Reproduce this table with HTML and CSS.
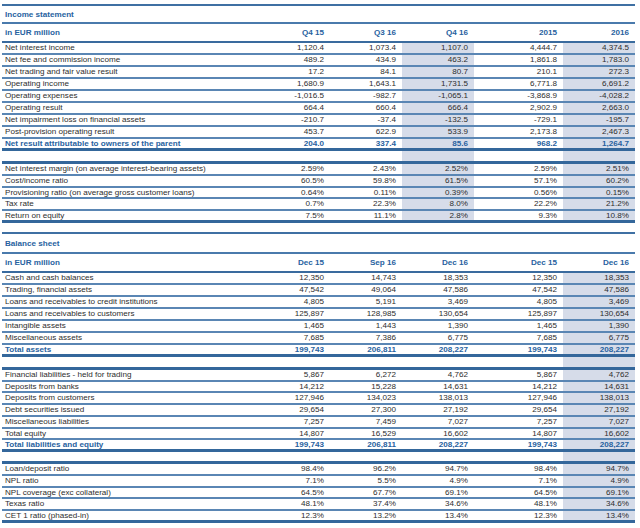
FILE: index.html
```html
<!DOCTYPE html>
<html lang="en">
<head>
<meta charset="utf-8">
<title>Income statement and balance sheet</title>
<link rel="stylesheet" href="styles.css">
</head>
<body>
<div class="sheet">
  <div class="block block--income">
    <div class="title">Income statement</div>
    <div class="row hdr"><div class="lbl">in EUR million</div><div class="v">Q4 15</div><div class="v">Q3 16</div><div class="v">Q4 16</div><div class="sp"></div><div class="v">2015</div><div class="v">2016</div></div>
    <div class="group g12">
      <div class="row r"><div class="lbl">Net interest income</div><div class="v">1,120.4</div><div class="v">1,073.4</div><div class="v">1,107.0</div><div class="sp"></div><div class="v">4,444.7</div><div class="v">4,374.5</div></div>
      <div class="row r"><div class="lbl">Net fee and commission income</div><div class="v">489.2</div><div class="v">434.9</div><div class="v">463.2</div><div class="sp"></div><div class="v">1,861.8</div><div class="v">1,783.0</div></div>
      <div class="row r"><div class="lbl">Net trading and fair value result</div><div class="v">17.2</div><div class="v">84.1</div><div class="v">80.7</div><div class="sp"></div><div class="v">210.1</div><div class="v">272.3</div></div>
      <div class="row r"><div class="lbl">Operating income</div><div class="v">1,680.9</div><div class="v">1,643.1</div><div class="v">1,731.5</div><div class="sp"></div><div class="v">6,771.8</div><div class="v">6,691.2</div></div>
      <div class="row r"><div class="lbl">Operating expenses</div><div class="v">-1,016.5</div><div class="v">-982.7</div><div class="v">-1,065.1</div><div class="sp"></div><div class="v">-3,868.9</div><div class="v">-4,028.2</div></div>
      <div class="row r"><div class="lbl">Operating result</div><div class="v">664.4</div><div class="v">660.4</div><div class="v">666.4</div><div class="sp"></div><div class="v">2,902.9</div><div class="v">2,663.0</div></div>
      <div class="row r"><div class="lbl">Net impairment loss on financial assets</div><div class="v">-210.7</div><div class="v">-37.4</div><div class="v">-132.5</div><div class="sp"></div><div class="v">-729.1</div><div class="v">-195.7</div></div>
      <div class="row r"><div class="lbl">Post-provision operating result</div><div class="v">453.7</div><div class="v">622.9</div><div class="v">533.9</div><div class="sp"></div><div class="v">2,173.8</div><div class="v">2,467.3</div></div>
      <div class="row r total last"><div class="lbl">Net result attributable to owners of the parent</div><div class="v">204.0</div><div class="v">337.4</div><div class="v">85.6</div><div class="sp"></div><div class="v">968.2</div><div class="v">1,264.7</div></div>
    </div>
    <div class="row r gap gap--a"><div></div><div></div><div></div><div class="v"></div><div></div><div></div><div class="v"></div></div>
    <div class="group g118 first">
      <div class="row r"><div class="lbl">Net interest margin (on average interest-bearing assets)</div><div class="v">2.59%</div><div class="v">2.43%</div><div class="v">2.52%</div><div class="sp"></div><div class="v">2.59%</div><div class="v">2.51%</div></div>
      <div class="row r"><div class="lbl">Cost/income ratio</div><div class="v">60.5%</div><div class="v">59.8%</div><div class="v">61.5%</div><div class="sp"></div><div class="v">57.1%</div><div class="v">60.2%</div></div>
      <div class="row r"><div class="lbl">Provisioning ratio (on average gross customer loans)</div><div class="v">0.64%</div><div class="v">0.11%</div><div class="v">0.39%</div><div class="sp"></div><div class="v">0.56%</div><div class="v">0.15%</div></div>
      <div class="row r"><div class="lbl">Tax rate</div><div class="v">0.7%</div><div class="v">22.3%</div><div class="v">8.0%</div><div class="sp"></div><div class="v">22.2%</div><div class="v">21.2%</div></div>
      <div class="row r last"><div class="lbl">Return on equity</div><div class="v">7.5%</div><div class="v">11.1%</div><div class="v">2.8%</div><div class="sp"></div><div class="v">9.3%</div><div class="v">10.8%</div></div>
    </div>
  </div>

  <div class="block block--balance">
    <div class="title title--bs">Balance sheet</div>
    <div class="row hdr"><div class="lbl">in EUR million</div><div class="v">Dec 15</div><div class="v">Sep 16</div><div class="v">Dec 16</div><div class="sp"></div><div class="v">Dec 15</div><div class="v">Dec 16</div></div>
    <div class="group g12">
      <div class="row r"><div class="lbl">Cash and cash balances</div><div class="v">12,350</div><div class="v">14,743</div><div class="v">18,353</div><div class="sp"></div><div class="v">12,350</div><div class="v">18,353</div></div>
      <div class="row r"><div class="lbl">Trading, financial assets</div><div class="v">47,542</div><div class="v">49,064</div><div class="v">47,586</div><div class="sp"></div><div class="v">47,542</div><div class="v">47,586</div></div>
      <div class="row r"><div class="lbl">Loans and receivables to credit institutions</div><div class="v">4,805</div><div class="v">5,191</div><div class="v">3,469</div><div class="sp"></div><div class="v">4,805</div><div class="v">3,469</div></div>
      <div class="row r"><div class="lbl">Loans and receivables to customers</div><div class="v">125,897</div><div class="v">128,985</div><div class="v">130,654</div><div class="sp"></div><div class="v">125,897</div><div class="v">130,654</div></div>
      <div class="row r"><div class="lbl">Intangible assets</div><div class="v">1,465</div><div class="v">1,443</div><div class="v">1,390</div><div class="sp"></div><div class="v">1,465</div><div class="v">1,390</div></div>
      <div class="row r"><div class="lbl">Miscellaneous assets</div><div class="v">7,685</div><div class="v">7,386</div><div class="v">6,775</div><div class="sp"></div><div class="v">7,685</div><div class="v">6,775</div></div>
      <div class="row r total last"><div class="lbl">Total assets</div><div class="v">199,743</div><div class="v">206,811</div><div class="v">208,227</div><div class="sp"></div><div class="v">199,743</div><div class="v">208,227</div></div>
    </div>
    <div class="row r gap"><div></div><div></div><div></div><div></div><div></div><div></div><div class="v"></div></div>
    <div class="group g1175 first">
      <div class="row r"><div class="lbl">Financial liabilities - held for trading</div><div class="v">5,867</div><div class="v">6,272</div><div class="v">4,762</div><div class="sp"></div><div class="v">5,867</div><div class="v">4,762</div></div>
      <div class="row r"><div class="lbl">Deposits from banks</div><div class="v">14,212</div><div class="v">15,228</div><div class="v">14,631</div><div class="sp"></div><div class="v">14,212</div><div class="v">14,631</div></div>
      <div class="row r"><div class="lbl">Deposits from customers</div><div class="v">127,946</div><div class="v">134,023</div><div class="v">138,013</div><div class="sp"></div><div class="v">127,946</div><div class="v">138,013</div></div>
      <div class="row r"><div class="lbl">Debt securities issued</div><div class="v">29,654</div><div class="v">27,300</div><div class="v">27,192</div><div class="sp"></div><div class="v">29,654</div><div class="v">27,192</div></div>
      <div class="row r"><div class="lbl">Miscellaneous liabilities</div><div class="v">7,257</div><div class="v">7,459</div><div class="v">7,027</div><div class="sp"></div><div class="v">7,257</div><div class="v">7,027</div></div>
      <div class="row r"><div class="lbl">Total equity</div><div class="v">14,807</div><div class="v">16,529</div><div class="v">16,602</div><div class="sp"></div><div class="v">14,807</div><div class="v">16,602</div></div>
      <div class="row r total last"><div class="lbl">Total liabilities and equity</div><div class="v">199,743</div><div class="v">206,811</div><div class="v">208,227</div><div class="sp"></div><div class="v">199,743</div><div class="v">208,227</div></div>
    </div>
    <div class="row r gap gap--b"><div></div><div></div><div></div><div></div><div></div><div></div><div class="v"></div></div>
    <div class="group g117 first">
      <div class="row r"><div class="lbl">Loan/deposit ratio</div><div class="v">98.4%</div><div class="v">96.2%</div><div class="v">94.7%</div><div class="sp"></div><div class="v">98.4%</div><div class="v">94.7%</div></div>
      <div class="row r"><div class="lbl">NPL ratio</div><div class="v">7.1%</div><div class="v">5.5%</div><div class="v">4.9%</div><div class="sp"></div><div class="v">7.1%</div><div class="v">4.9%</div></div>
      <div class="row r"><div class="lbl">NPL coverage (exc collateral)</div><div class="v">64.5%</div><div class="v">67.7%</div><div class="v">69.1%</div><div class="sp"></div><div class="v">64.5%</div><div class="v">69.1%</div></div>
      <div class="row r"><div class="lbl">Texas ratio</div><div class="v">48.1%</div><div class="v">37.4%</div><div class="v">34.6%</div><div class="sp"></div><div class="v">48.1%</div><div class="v">34.6%</div></div>
      <div class="row r last"><div class="lbl">CET 1 ratio (phased-in)</div><div class="v">12.3%</div><div class="v">13.2%</div><div class="v">13.4%</div><div class="sp"></div><div class="v">12.3%</div><div class="v">13.4%</div></div>
    </div>
  </div>
</div>
</body>
</html>
```

FILE: styles.css
```css
html, body {
  margin: 0;
  padding: 0;
  background: #ffffff;
}

.sheet {
  width: 633px;
  margin-left: 2px;
  padding-top: 4px;
  font-family: "Liberation Sans", Arial, sans-serif;
  font-size: 8.1px;
  color: #2e2e2e;
}

.title {
  box-sizing: border-box;
  height: 20px;
  border-top: 2px solid #3f70a3;
  border-bottom: 2px solid #4a7aac;
  padding-left: 3px;
  padding-top: 1px;
  line-height: 16px;
  font-weight: bold;
  color: #2862a0;
}

.title--bs {
  height: 22px;
  margin-top: 9px;
  line-height: 17px;
}

.row {
  display: grid;
  grid-template-columns: 256px 72px 72px 72px 18px 71px 72px;
  box-sizing: border-box;
  border-bottom: 2px solid #5a86b4;
}

.row > div {
  overflow: hidden;
  white-space: nowrap;
}

.lbl {
  padding-left: 3px;
}

.v {
  text-align: right;
  padding-right: 6px;
}

.hdr {
  height: 19px;
  line-height: 17.5px;
  border-bottom: 2px solid #3a6b9e;
  font-weight: bold;
  color: #2862a0;
}

.g12 .row { height: 12px; line-height: 10px; }
.g118 .row { height: 11.8px; line-height: 9.8px; }
.g1175 .row { height: 11.75px; line-height: 9.75px; }
.g117 .row { height: 11.7px; line-height: 9.7px; }

.group.first {
  border-top: 3px solid #34679b;
}

.row.last {
  border-bottom: 3px solid #34679b;
}

.total {
  font-weight: bold;
  color: #2862a0;
}

.gap {
  height: 10px;
  border-bottom: 0;
}

.gap--b {
  height: 9px;
}

.block--income .r > :nth-child(4),
.block--income .r > :nth-child(7),
.block--balance .r > :nth-child(7) {
  background: #d6dce9;
}
```
